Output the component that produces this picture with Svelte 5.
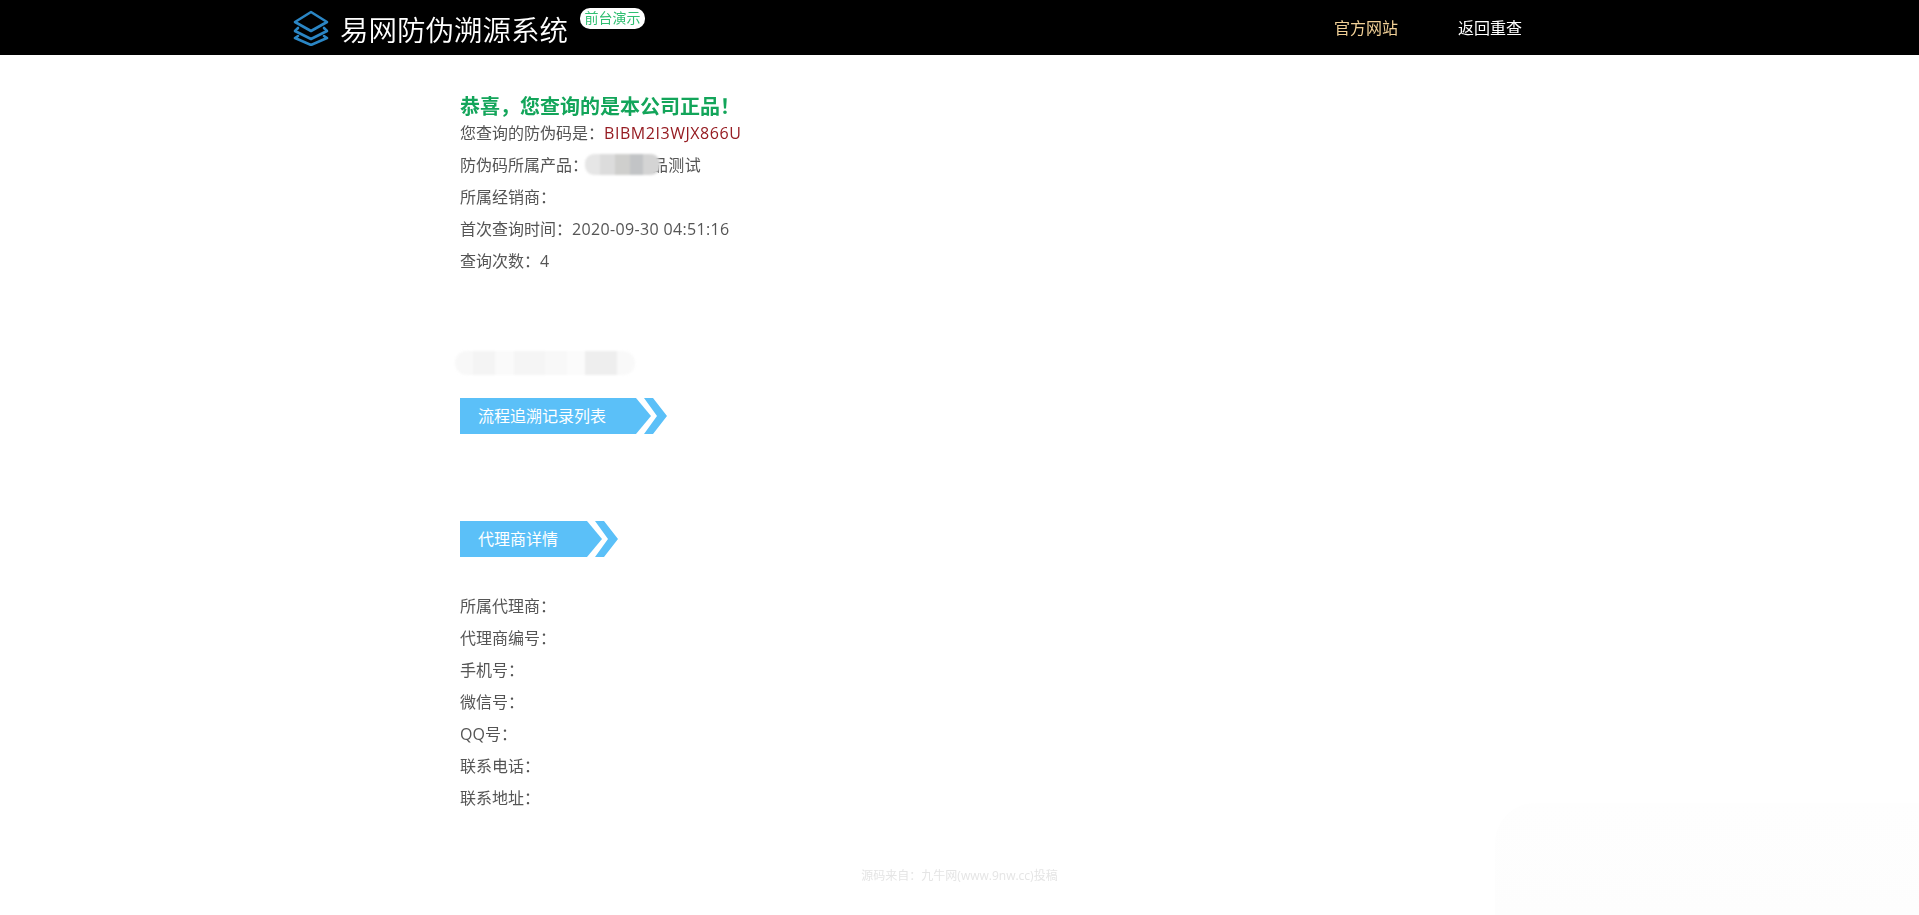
<script>
	const scanRows = [
		{ label: '防伪码所属产品：', value: '品测试', blurred: true },
		{ label: '所属经销商：', value: '' },
		{ label: '首次查询时间：', value: '2020-09-30 04:51:16' },
		{ label: '查询次数：', value: '4' }
	];

	const agentRows = ['所属代理商：', '代理商编号：', '手机号：', '微信号：', 'QQ号：', '联系电话：', '联系地址：'];
</script>

<header class="topbar">
	<div class="brand">
		<svg class="brand-icon" viewBox="0 0 36 36" width="36" height="36" fill="none" stroke="#2b86c5" stroke-width="2.6" stroke-linejoin="round" stroke-linecap="round">
			<path d="M18 2 L34 12 L18 21 L2 12 Z" />
			<path d="M5 18 L2 21 L18 29 L34 21 L31 18" />
			<path d="M5 26 L2 28 L18 35 L34 28 L31 26" />
		</svg>
		<span class="brand-name">易网防伪溯源系统</span>
		<span class="badge">前台演示</span>
	</div>
	<nav class="nav">
		<a class="nav-link official" href="#top">官方网站</a>
		<a class="nav-link" href="#top">返回重查</a>
	</nav>
</header>

<main class="content">
	<h1 class="result-title">恭喜，您查询的是本公司正品！</h1>
	<p class="code-row">您查询的防伪码是：<span class="code">BIBM2I3WJX866U</span></p>
	{#each scanRows as row}
		<p class="row">
			{row.label}{#if row.blurred}<span class="smudge"></span>{/if}<span class="value">{row.value}</span>
		</p>
	{/each}

	<div class="smudge-line"></div>

	<div class="ribbon trace">
		<span class="ribbon-label">流程追溯记录列表</span>
		<span class="chevron"></span>
	</div>

	<div class="ribbon agent">
		<span class="ribbon-label">代理商详情</span>
		<span class="chevron"></span>
	</div>

	<div class="agent-rows">
		{#each agentRows as row}
			<p class="row">{row}</p>
		{/each}
	</div>
</main>

<footer class="footer">源码来自：九牛网(www.9nw.cc)投稿</footer>
<div class="corner-shade"></div>

<style>
	:global(body) {
		background: #fff;
		font-family: "Open Sans", "Noto Sans CJK SC", sans-serif;
		color: #555;
	}

	p,
	h1 {
		margin: 0;
	}

	.topbar {
		height: 55px;
		background: #000;
		display: flex;
		justify-content: space-between;
		padding: 0 397px 0 293px;
	}

	.brand {
		display: flex;
		align-items: flex-start;
	}

	.brand-icon {
		margin-top: 10px;
	}

	.brand-name {
		margin: 9px 0 0 11px;
		font-family: "Noto Sans CJK SC", sans-serif;
		font-size: 28.5px;
		font-weight: 350;
		line-height: 40px;
		color: #fff;
	}

	.badge {
		margin: 8px 0 0 12px;
		width: 65px;
		height: 21px;
		border-radius: 10px;
		background: #fff;
		color: #2fbf71;
		font-size: 14px;
		line-height: 20px;
		text-align: center;
	}

	.nav {
		display: flex;
		gap: 60px;
		padding-top: 16px;
	}

	.nav-link {
		font-size: 16px;
		line-height: 24px;
		color: #fff;
		text-decoration: none;
	}

	.official {
		color: #f0cf96;
	}

	.content {
		padding: 38px 0 0 460px;
	}

	.result-title {
		font-size: 20px;
		font-weight: 700;
		line-height: 28px;
		color: #13a55a;
	}

	.code-row {
		font-size: 16px;
		line-height: 24px;
		color: #555;
	}

	.code {
		letter-spacing: 0.55px;
		color: #961c22;
	}

	.row {
		font-size: 16px;
		line-height: 32px;
		color: #555;
	}

	.value {
		letter-spacing: 0.35px;
	}

	.code-row + .row {
		margin-top: 4px;
	}

	/* hidden part of the product name, the mosaic runs over the next glyph */
	.smudge {
		position: relative;
		display: inline-block;
		width: 64px;
		height: 16px;
	}

	.smudge::after {
		content: '';
		position: absolute;
		top: -1px;
		left: -3px;
		width: 75px;
		height: 21px;
		border-radius: 9px;
		filter: blur(1px);
		background: linear-gradient(90deg, #e6e6e6 0 20%, #dcdcdc 20% 40%, #cfcfcd 40% 60%, #c2c4c6 60% 78%, #d4d4d4 78% 100%);
	}

	.smudge-line {
		width: 180px;
		height: 24px;
		margin: 74px 0 0 -5px;
		border-radius: 12px;
		filter: blur(1px);
		background: linear-gradient(90deg, #f8f8f8 0 10%, #f4f4f4 10% 22%, #fafafa 22% 33%, #f5f5f5 33% 50%, #f8f8f8 50% 62%, #fbfbfb 62% 72%, #eeeeee 72% 90%, #f9f9f9 90% 100%);
	}

	.ribbon {
		position: relative;
		height: 36px;
		display: flex;
		align-items: center;
		color: #fff;
		font-size: 16px;
	}

	.trace {
		width: 207px;
		margin-top: 23px;
	}

	.agent {
		width: 158px;
		margin-top: 87px;
	}

	.ribbon-label {
		height: 100%;
		flex: 1;
		padding-left: 18px;
		margin-right: 16px;
		line-height: 36px;
		background: #5bc0f8;
		clip-path: polygon(0 0, calc(100% - 15px) 0, 100% 50%, calc(100% - 15px) 100%, 0 100%);
	}

	.chevron {
		position: absolute;
		top: 0;
		right: 0;
		width: 23px;
		height: 36px;
		background: #5bc0f8;
		clip-path: polygon(0 0, 9px 0, 100% 50%, 9px 100%, 0 100%, 13px 50%);
	}

	.agent-rows {
		margin-top: 33px;
	}

	.footer {
		margin-top: 52px;
		text-align: center;
		font-size: 12px;
		line-height: 20px;
		color: #e5e5e5;
	}

	.corner-shade {
		position: fixed;
		right: 0;
		bottom: 0;
		width: 424px;
		height: 112px;
		border-top-left-radius: 40px;
		background: linear-gradient(180deg, #fefefe, #fdfdfd);
		z-index: -1;
	}
</style>
